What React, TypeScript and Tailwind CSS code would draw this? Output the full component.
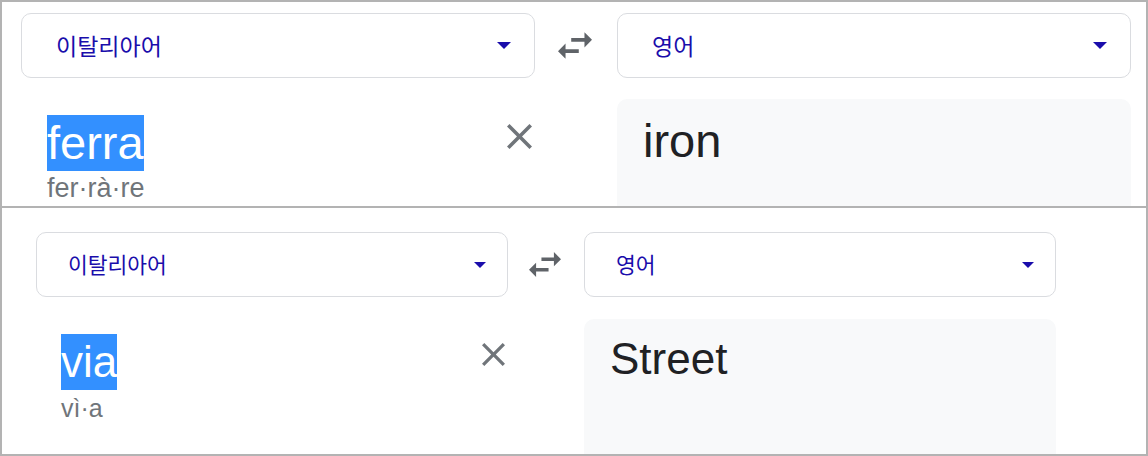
import React from "react";

type PanelStyle = {
  wrap: string;
  col: string;
  swapCol: string;
  swapIcon: string;
  labelText: string;
  labelPad: string;
  caret: string;
  rowGap: string;
  inputPad: string;
  wordText: string;
  subText: string;
  closeBox: string;
  closeIcon: string;
  outputPad: string;
  outputText: string;
};

const topStyle: PanelStyle = {
  wrap: "h-[206px] pl-[19px] pt-[11px] border-b-2 border-[#b3b3b3]",
  col: "w-[514px]",
  swapCol: "w-[82px] pr-[3px]",
  swapIcon: "w-[34px] h-[27px]",
  labelText: "text-[23px]",
  labelPad: "pl-[34px] pr-[23px]",
  caret: "border-l-[7px] border-r-[7px] border-t-[7px]",
  rowGap: "mt-[21px]",
  inputPad: "pt-[16px] pl-[26px]",
  wordText: "text-[47px]",
  subText: "text-[27px] leading-[30px] mt-[2px]",
  closeBox: "mt-[25px] mr-[3px]",
  closeIcon: "w-[25px] h-[25px]",
  outputPad: "pt-[14px] pl-[26px]",
  outputText: "text-[47px]",
};

const bottomStyle: PanelStyle = {
  wrap: "flex-1 pl-[34px] pt-[24px]",
  col: "w-[472px]",
  swapCol: "w-[76px] pr-[3px]",
  swapIcon: "w-[32px] h-[25px]",
  labelText: "text-[21.5px]",
  labelPad: "pl-[31px] pr-[21px]",
  caret: "border-l-[6.5px] border-r-[6.5px] border-t-[6.5px]",
  rowGap: "mt-[22px]",
  inputPad: "pt-[15px] pl-[25px]",
  wordText: "text-[44px]",
  subText: "text-[25px] leading-[30px] mt-[3px]",
  closeBox: "mt-[24px] mr-[3px]",
  closeIcon: "w-[23px] h-[23px]",
  outputPad: "pt-[12px] pl-[26px]",
  outputText: "text-[44px]",
};

const LangSelect = ({ label, s }: { label: string; s: PanelStyle }) => (
  <div
    className={`${s.col} h-[65px] flex items-center justify-between rounded-[10px] border border-[#dadce0] bg-white ${s.labelPad}`}
  >
    <span
      className={`${s.labelText} text-[#1a0dab] [font-family:'Noto_Sans_CJK_KR',sans-serif]`}
    >
      {label}
    </span>
    <span
      className={`w-0 h-0 border-l-transparent border-r-transparent border-t-[#1a0dab] ${s.caret}`}
    />
  </div>
);

const SwapIcon = ({ cls }: { cls: string }) => (
  <svg viewBox="3 5 18 14" className={cls} fill="#5f6368">
    <path d="M6.99 11L3 15l3.99 4v-3H14v-2H6.99v-3zM21 9l-3.99-4v3H10v2h7.01v3L21 9z" />
  </svg>
);

const CloseIcon = ({ cls }: { cls: string }) => (
  <svg viewBox="5 5 14 14" className={cls} fill="#70757a">
    <path d="M19 6.41L17.59 5 12 10.59 6.41 5 5 6.41 10.59 12 5 17.59 6.41 19 12 13.41 17.59 19 19 17.59 13.41 12z" />
  </svg>
);

const TranslatePanel = ({
  s,
  word,
  syllables,
  result,
}: {
  s: PanelStyle;
  word: string;
  syllables: string;
  result: string;
}) => (
  <div className={`${s.wrap} flex overflow-hidden`}>
    <div className={`${s.col} flex flex-col shrink-0`}>
      <LangSelect label="이탈리아어" s={s} />
      <div className={`${s.rowGap} flex justify-between`}>
        <div className={`${s.inputPad} flex flex-col`}>
          <div>
            <span
              className={`inline-block h-[56px] leading-[56px] bg-[#3390ff] text-white ${s.wordText}`}
            >
              {word}
            </span>
          </div>
          <span className={`${s.subText} text-[#70757a]`}>{syllables}</span>
        </div>
        <div className={s.closeBox}>
          <CloseIcon cls={s.closeIcon} />
        </div>
      </div>
    </div>
    <div className={`${s.swapCol} h-[65px] flex items-center justify-center shrink-0`}>
      <SwapIcon cls={s.swapIcon} />
    </div>
    <div className={`${s.col} flex flex-col shrink-0`}>
      <LangSelect label="영어" s={s} />
      <div
        className={`${s.rowGap} flex-1 rounded-t-[10px] bg-[#f8f9fa] ${s.outputPad}`}
      >
        <span className={`block leading-[56px] text-[#202124] ${s.outputText}`}>
          {result}
        </span>
      </div>
    </div>
  </div>
);

export default function App() {
  return (
    <div className="w-[1148px] h-[456px] border-2 border-[#b3b3b3] bg-white flex flex-col overflow-hidden [font-family:'Liberation_Sans',Arial,sans-serif]">
      <TranslatePanel s={topStyle} word="ferra" syllables="fer·rà·re" result="iron" />
      <TranslatePanel s={bottomStyle} word="via" syllables="vì·a" result="Street" />
    </div>
  );
}
